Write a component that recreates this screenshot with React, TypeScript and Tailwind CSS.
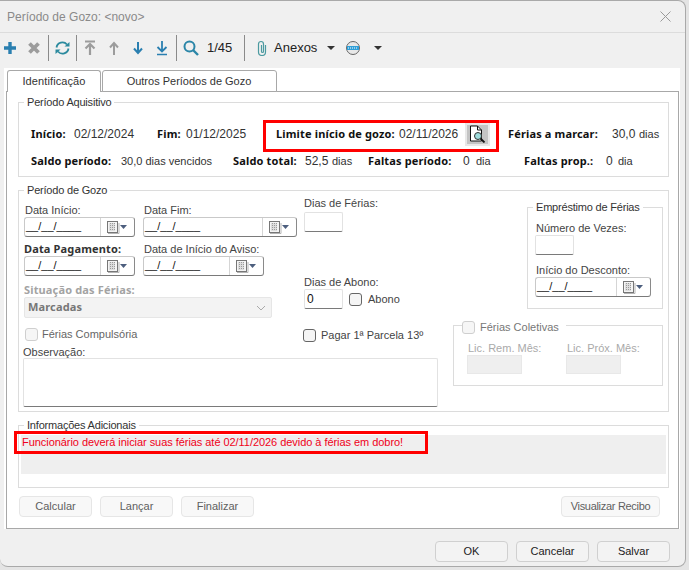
import React from "react";

function Sep({ ml }: { ml: string }) {
  return <div className={`w-px h-[26px] bg-[#8a8a8a] shrink-0 ${ml}`} />;
}

function Ic({ w = 16, className = "", children }: { w?: number; className?: string; children: React.ReactNode }) {
  return (
    <svg width={w} height={16} viewBox={`0 0 ${w} 16`} className={`shrink-0 ${className}`} fill="none">
      {children}
    </svg>
  );
}

const BLUE = "#2a7fb0";
const GRAY = "#9c9c9c";

function Toolbar() {
  return (
    <div className="h-[35px] shrink-0 flex items-center pb-[5px] text-[13px] text-[#222]">
      <Ic w={12} className="ml-[4px]"><path d="M6 2v12M0 8h12" stroke={BLUE} strokeWidth="3.4" /></Ic>
      <Ic w={12} className="ml-[12px]"><path d="M1.500 3.500l9 9M10.500 3.500l-9 9" stroke={GRAY} strokeWidth="3.8" /></Ic>
      <Sep ml="ml-[8px]" />
      <Ic w={15} className="ml-[6px]">
        <path d="M1.500 7.500A6 6 0 0 1 12 4.500" stroke="#2b8a9e" strokeWidth="1.800" />
        <path d="M13.500 8.500A6 6 0 0 1 3 11.500" stroke="#2b8a9e" strokeWidth="1.800" />
        <path d="M9.500 6.500h5V2z" fill="#2b8a9e" />
        <path d="M5.500 9.500h-5V14z" fill="#2b8a9e" />
      </Ic>
      <Sep ml="ml-[6px]" />
      <Ic w={12} className="ml-[7px]">
        <path d="M1 1.500h10" stroke={GRAY} strokeWidth="2" />
        <path d="M6 15V5M1.500 8.500L6 4l4.500 4.500" stroke={GRAY} strokeWidth="2.200" />
      </Ic>
      <Ic w={10} className="ml-[13px]"><path d="M5 15V4M1 7.500L5 3l4 4.500" stroke={GRAY} strokeWidth="2" /></Ic>
      <Ic w={10} className="ml-[14px]"><path d="M5 2v11M1 8.500L5 13l4-4.500" stroke={BLUE} strokeWidth="2" /></Ic>
      <Ic w={12} className="ml-[13px]">
        <path d="M6 1v10M1.500 7L6 11.500 10.500 7" stroke={BLUE} strokeWidth="1.800" />
        <path d="M1 14.500h10" stroke={BLUE} strokeWidth="1.500" />
      </Ic>
      <Sep ml="ml-[8px]" />
      <Ic w={16} className="ml-[6px]">
        <circle cx="6.500" cy="6.500" r="5" stroke="#2b86a8" strokeWidth="2" />
        <path d="M10 10l5 5" stroke="#2b86a8" strokeWidth="2.400" />
      </Ic>
      <span className="ml-[8px] w-[30px]">1/45</span>
      <Sep ml="ml-[7px]" />
      <Ic w={12} className="ml-[11px]">
        <path d="M9.500 5v7a3.500 3.500 0 0 1-7 0V4a2.500 2.500 0 0 1 5 0v7.500a1 1 0 0 1-2 0V5" stroke="#4b9aa0" strokeWidth="1.200" />
      </Ic>
      <span className="ml-[6px] w-[42px]">Anexos</span>
      <div className="ml-[11px] w-0 h-0 border-x-[4px] border-x-transparent border-t-[4px] border-t-[#333]" />
      <Ic w={16} className="ml-[10px]">
        <circle cx="8" cy="8" r="6.500" fill="#e8e8e8" stroke="#666" />
        <rect x="2" y="6" width="12" height="4" fill="#2f9fd8" />
        <path d="M3 8h10" stroke="#fff" strokeDasharray="1 1" />
      </Ic>
      <div className="ml-[13px] w-0 h-0 border-x-[4px] border-x-transparent border-t-[4px] border-t-[#333]" />
    </div>
  );
}

function Group({ title, className = "", children }: { title: string; className?: string; children?: React.ReactNode }) {
  return (
    <fieldset className={`border border-[#dcdcdc] ${className}`}>
      <legend className="ml-[5px] px-[3px] text-[11px] tracking-[-0.2px] leading-[14px] text-[#333] whitespace-nowrap">{title}</legend>
      {children}
    </fieldset>
  );
}

function Cal() {
  return (
    <svg width="22" height="14" viewBox="0 0 22 14" fill="none" className="shrink-0">
      <rect x="0.500" y="1.500" width="10" height="11" fill="#f4f4f4" stroke="#777" />
      <path d="M2.500 4h6M2.500 6h6M2.500 8h6M2.500 10h6M3.500 3v8M5.500 3v8M7.500 3v8" stroke="#9a9a9a" strokeDasharray="1 1" />
      <path d="M1 13.500h11V3" stroke="#b5b5b5" />
      <path d="M13 5h7l-3.500 4z" fill="#4d5f7e" />
    </svg>
  );
}

function DateField({ width, inputW, className = "" }: { width: string; inputW: string; className?: string }) {
  return (
    <div className={`h-[20px] flex border border-[#c9c9c9] border-b-[#7a7a7a] border-r-[#8a8a8a] rounded-[3px] bg-white ${width} ${className}`}>
      <div className={`${inputW} shrink-0 pl-[1px] border-r border-[#d5d5d5] text-[11px] leading-[17px] text-[#111]`}>
        __/__/____
      </div>
      <div className="flex-1 flex items-center justify-center">
        <Cal />
      </div>
    </div>
  );
}

function Box({ className = "", children }: { className?: string; children?: React.ReactNode }) {
  return (
    <div className={`w-[39px] h-[20px] shrink-0 border border-[#e2e2e2] border-b-[#7a7a7a] rounded-[2px] bg-white pl-[2px] text-[12px] leading-[18px] text-[#111] ${className}`}>
      {children}
    </div>
  );
}

function Check({ className = "", dim = false }: { className?: string; dim?: boolean }) {
  return (
    <div className={`w-[13px] h-[13px] rounded-[3px] border shrink-0 ${dim ? "border-[#cfcfcf] bg-[#f6f6f6]" : "border-[#666] bg-[#f5f5f5]"} ${className}`} />
  );
}

function Btn({ w, dim = false, className = "", children }: { w: string; dim?: boolean; className?: string; children: React.ReactNode }) {
  return (
    <div className={`h-[21px] ${w} rounded-[4px] border flex items-center justify-center text-[11px] ${dim ? "border-[#e6e6e6] bg-[#f8f8f8] text-[#5f5f5f]" : "border-[#d0d0d0] bg-[#f3f3f3] text-[#222]"} ${className}`}>
      {children}
    </div>
  );
}

function Lbl({ className = "", children }: { className?: string; children: React.ReactNode }) {
  return <div className={`text-[11px] leading-[14px] whitespace-nowrap ${className}`}>{children}</div>;
}

const BOLD = "[font-family:'Noto_Sans',sans-serif] font-bold tracking-[0.15px]";

function B({ className = "", children }: { className?: string; children: React.ReactNode }) {
  return <b className={`${BOLD} text-[11px] text-[#111] shrink-0 ${className}`}>{children}</b>;
}

function V({ className = "", children }: { className?: string; children: React.ReactNode }) {
  return <span className={`shrink-0 text-[12px] ${className}`}>{children}</span>;
}

function W({ className = "", children }: { className?: string; children: React.ReactNode }) {
  return <span className={`shrink-0 text-[11px] ${className}`}>{children}</span>;
}

function Aquisitivo() {
  return (
    <Group title="Período Aquisitivo" className="h-[82px] ml-[11px] mr-[9px] mt-[3px]">
      <div className="pl-[12px] pt-[15px] leading-[14px] text-[#333]">
        <div className="flex items-center h-[20px] whitespace-nowrap">
          <B className="w-[43px]">Início:</B>
          <V className="w-[83px]">02/12/2024</V>
          <B className="w-[29px]">Fim:</B>
          <V className="w-[90px]">01/12/2025</V>
          <B className="w-[123px]">Limite início de gozo:</B>
          <V className="w-[66px]">02/11/2026</V>
          <div className="w-[25px] h-[23px] bg-[#c4c4c4] border-[2px] border-[#e8e8e8] flex items-center justify-center shrink-0">
            <svg width="17" height="18" viewBox="0 0 17 18" fill="none">
              <path d="M1.500 1h7l4 4v11h-11z" fill="#fff" stroke="#111" />
              <path d="M8.500 1v4h4" stroke="#111" />
              <circle cx="9" cy="11" r="3.500" fill="#9fdcdc" stroke="#333" />
              <path d="M11.500 13.500l4 4" stroke="#111" strokeWidth="1.800" />
            </svg>
          </div>
          <B className="ml-[18px] w-[104px]">Férias a marcar:</B>
          <V className="w-[27px]">30,0</V>
          <W>dias</W>
        </div>
        <div className="flex items-center h-[20px] mt-[7px] whitespace-nowrap">
          <B className="w-[90px]">Saldo período:</B>
          <W className="w-[112px]">30,0 dias vencidos</W>
          <B className="w-[72px]">Saldo total:</B>
          <V className="w-[27px]">52,5</V>
          <W className="w-[36px]">dias</W>
          <B className="w-[95px]">Faltas período:</B>
          <V className="w-[13px]">0</V>
          <W className="w-[48px]">dia</W>
          <B className="w-[82px]">Faltas prop.:</B>
          <V className="w-[12px]">0</V>
          <W>dia</W>
        </div>
      </div>
    </Group>
  );
}

function Gozo() {
  return (
    <Group title="Período de Gozo" className="h-[229px] ml-[11px] mr-[9px] mt-[6px]">
      <div className="flex pl-[5px] text-[#444]">
        <div className="w-[414px] shrink-0">
          <div className="flex h-[124px]">
            <div className="w-[280px] shrink-0">
              <div className="flex gap-[8px] pt-[6px]">
                <div>
                  <Lbl className="pl-[1px]">Data Início:</Lbl>
                  <DateField width="w-[111px]" inputW="w-[76px]" />
                </div>
                <div>
                  <Lbl className="pl-[1px]">Data Fim:</Lbl>
                  <DateField width="w-[154px]" inputW="w-[119px]" />
                </div>
              </div>
              <div className="flex gap-[8px] mt-[5px]">
                <div>
                  <Lbl className={`${BOLD} text-[#333]`}>Data Pagamento:</Lbl>
                  <DateField width="w-[111px]" inputW="w-[76px]" />
                </div>
                <div>
                  <Lbl className="pl-[1px]">Data de Início do Aviso:</Lbl>
                  <DateField width="w-[121px]" inputW="w-[86px]" />
                </div>
              </div>
              <Lbl className={`mt-[7px] ${BOLD} text-[#a3a3a3]`}>Situação das Férias:</Lbl>
              <div className="w-[248px] h-[21px] bg-[#f3f3f3] border border-[#e6e6e6] rounded-[2px] flex items-center justify-between pl-[3px] pr-[5px]">
                <span className={`${BOLD} text-[11px] text-[#777]`}>Marcadas</span>
                <svg width="10" height="6" viewBox="0 0 10 6" fill="none"><path d="M1 1l4 4 4-4" stroke="#aaa" /></svg>
              </div>
            </div>
            <div>
              <Lbl className="-mt-[1px]">Dias de Férias:</Lbl>
              <Box className="mt-[2px]" />
              <Lbl className="mt-[43px]">Dias de Abono:</Lbl>
              <div className="flex items-center">
                <Box>0</Box>
                <Check className="ml-[6px]" />
                <Lbl className="ml-[6px]">Abono</Lbl>
              </div>
            </div>
          </div>
          <div className="flex h-[24px] items-start">
            <div className="w-[279px] shrink-0 flex items-center mt-[6px]">
              <Check dim className="ml-[1px]" />
              <Lbl className="ml-[4px] text-[#666]">Férias Compulsória</Lbl>
            </div>
            <div className="flex items-center mt-[7px]">
              <Check />
              <Lbl className="ml-[5px]">Pagar 1ª Parcela 13º</Lbl>
            </div>
          </div>
          <Lbl className="-ml-[1px] -mb-[1px]">Observação:</Lbl>
          <div className="-ml-[1px] w-[415px] h-[49px] border border-[#e2e2e2] border-b-[#7a7a7a] rounded-[2px] bg-white" />
        </div>
        <div className="pl-[15px] flex-1">
          <Group title="Empréstimo de Férias" className="ml-[74px] w-[136px] h-[109px] mt-[3px]">
            <div className="pl-[7px] pt-[7px]">
              <Lbl className="pl-[1px]">Número de Vezes:</Lbl>
              <Box />
              <Lbl className="mt-[8px] pl-[1px]">Início do Desconto:</Lbl>
              <DateField width="w-[116px]" inputW="w-[81px]" />
            </div>
          </Group>
          <fieldset className="mt-[9px] w-[210px] h-[68px] border border-[#dcdcdc]">
            <legend className="ml-[8px] pr-[7px] flex items-center text-[11px] leading-[14px] translate-y-[2px]">
              <Check dim />
              <span className="ml-[5px] text-[#777]">Férias Coletivas</span>
            </legend>
            <div className="flex pl-[13px] pt-[9px]">
              <div className="w-[99px] shrink-0">
                <Lbl className="text-[#aaa] pl-[1px]">Lic. Rem. Mês:</Lbl>
                <div className="w-[55px] h-[19px] bg-[#efefef] border border-[#e8e8e8]" />
              </div>
              <div className="w-[84px] shrink-0">
                <Lbl className="text-[#aaa] pl-[1px]">Lic. Próx. Mês:</Lbl>
                <div className="w-[55px] h-[19px] bg-[#efefef] border border-[#e8e8e8]" />
              </div>
            </div>
          </fieldset>
        </div>
      </div>
    </Group>
  );
}

function Info() {
  return (
    <Group title="Informações Adicionais" className="h-[70px] ml-[11px] mr-[9px] mt-[6px]">
      <div className="mx-[2px] mt-[3px] h-[39px] bg-[#efefef] pl-[1px] text-[11px] tracking-[-0.05px] leading-[14px] text-[#f00020] whitespace-nowrap">
        Funcionário deverá iniciar suas férias até 02/11/2026 devido à férias em dobro!
      </div>
    </Group>
  );
}

export default function App() {
  return (
    <div className="relative w-[689px] h-[570px] overflow-hidden bg-[#e4e4e4] [font-family:'Liberation_Sans',sans-serif]">
      <div className="w-[686px] h-[567px] bg-[#f0f0f0] border border-l-0 border-[#a9a9a9] rounded-tr-[8px] rounded-br-[8px] rounded-bl-[8px] flex flex-col">
        <div className="h-[32px] shrink-0 border-b border-[#dcdcdc] flex items-center justify-between pl-[7px] pr-[14px] text-[12px] text-[#8a8a8a]">
          <span>Período de Gozo: &lt;novo&gt;</span>
          <svg width="11" height="11" viewBox="0 0 11 11" fill="none"><path d="M.5.500l10 10M10.500.500l-10 10" stroke="#999" /></svg>
        </div>
        <Toolbar />
        <div className="ml-[4px] w-[676px] h-[461px] bg-white shrink-0 pt-[2px] pl-[2px]">
          <div className="flex items-end h-[22px] text-[11px] text-[#333] -mb-px relative pl-[1px]">
            <div className="h-[22px] w-[94px] border border-b-0 border-[#a8a8a8] rounded-t-[3px] bg-white flex items-center justify-center tracking-[0.1px]">
              Identificação
            </div>
            <div className="h-[22px] w-[175px] border border-[#a8a8a8] ml-px rounded-t-[3px] bg-white flex items-center justify-center pr-[1px]">
              Outros Períodos de Gozo
            </div>
          </div>
          <div className="w-[673px] h-[438px] border border-[#a8a8a8] bg-white">
            <Aquisitivo />
            <Gozo />
            <Info />
            <div className="flex mx-[12px] mt-[8px] gap-[8px]">
              <Btn w="w-[73px]" dim>Calcular</Btn>
              <Btn w="w-[73px]" dim>Lançar</Btn>
              <Btn w="w-[73px]" dim>Finalizar</Btn>
              <div className="ml-auto mr-[6px]">
                <Btn w="w-[99px]" dim className="tracking-[-0.3px]">Visualizar Recibo</Btn>
              </div>
            </div>
          </div>
        </div>
        <div className="flex justify-end gap-[8px] pr-[15px] pt-[12px]">
          <Btn w="w-[73px]">OK</Btn>
          <Btn w="w-[73px]">Cancelar</Btn>
          <Btn w="w-[73px]">Salvar</Btn>
        </div>
      </div>
      <div className="absolute left-[263px] top-[120px] w-[236px] h-[32px] border-[3px] border-[#ff0000]" />
      <div className="absolute left-[14px] top-[431px] w-[414px] h-[23px] border-[3px] border-[#ff0000]" />
    </div>
  );
}
